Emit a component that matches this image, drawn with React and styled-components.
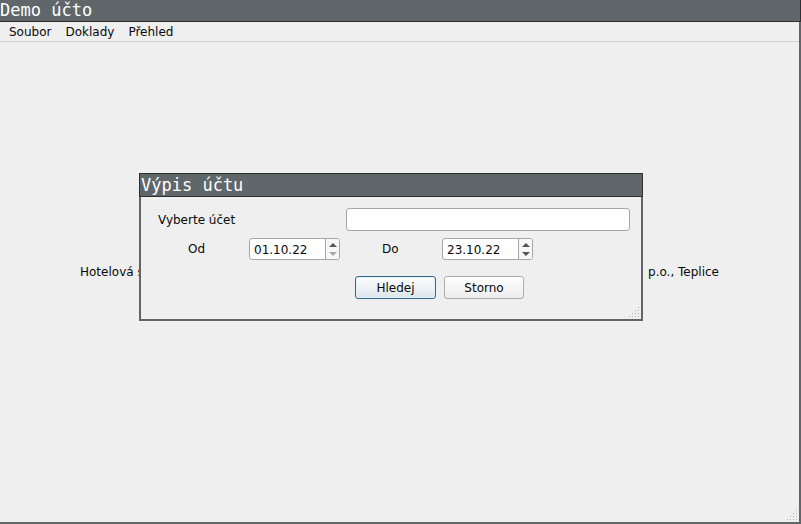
import React from "react";
import styled, { createGlobalStyle } from "styled-components";

const GlobalStyle = createGlobalStyle`
  * { box-sizing: border-box; }
  html, body, #root { height: 100%; }
  body {
    margin: 0;
    background: #efefef;
    color: #0a0a0a;
    font: 12px/14px "DejaVu Sans", sans-serif;
  }
  button, input { font: inherit; color: inherit; margin: 0; }
`;

const Window = styled.main`
  position: relative;
  display: flex;
  flex-direction: column;
  min-height: 100vh;
`;

const TitleBar = styled.header`
  height: ${(p) => (p.$framed ? 24 : 22)}px;
  padding-left: ${(p) => (p.$framed ? 1 : 0)}px;
  border: 1px solid #2d3031;
  border-width: ${(p) => (p.$framed ? "1px" : "0 1px 1px 0")};
  background: #5f676a;
`;

const Title = styled.h1`
  margin: 0;
  color: #fff;
  font: 400 17px/${(p) => (p.$framed ? 22 : 20)}px "DejaVu Sans Mono", monospace;
  white-space: nowrap;
`;

const WindowBody = styled.div`
  position: relative;
  flex: 1;
  display: flex;
  flex-direction: column;
  border: solid #606567;
  border-width: 0 2px 2px 0;
`;

const MenuBar = styled.nav`
  display: flex;
  gap: 2px;
  height: 20px;
  padding-left: 3px;
  border-bottom: 1px solid #d2d2d2;
`;

const MenuItem = styled.button`
  padding: 1px 6px 0;
  border: 0;
  background: none;
  line-height: 18px;
`;

const Workspace = styled.section`
  flex: 1;
  display: flex;
  align-items: center;
  justify-content: space-between;
  padding: 0 80px 20px;
`;

const Dialog = styled.section`
  position: absolute;
  top: 173px;
  left: 139px;
  right: 158px;
  background: #efefef;
`;

const DialogForm = styled.form`
  position: relative;
  padding: 11px 11px 20px 17px;
  border: 2px solid #606567;
  border-top: 0;
`;

const AccountRow = styled.div`
  display: grid;
  grid-template-columns: 188px 1fr;
  align-items: center;
`;

const field = `
  border: 1px solid #a6a6a6;
  border-radius: 3px;
  background: #fff;
`;

const AccountInput = styled.input`
  ${field}
  width: 100%;
  height: 23px;
  padding: 0 4px;
  outline: 0;
`;

const DateRow = styled.div`
  display: flex;
  gap: 42px;
  margin: 7px 0 0 30px;
`;

const DateField = styled.div`
  display: grid;
  grid-template-columns: ${(p) => p.$labelWidth}px 91px;
  line-height: 22px;
`;

const SpinBox = styled.div`
  ${field}
  display: flex;
  height: 22px;
  overflow: hidden;
`;

const DateInput = styled.input`
  flex: 1;
  min-width: 0;
  padding: 2px 0 0 4px;
  border: 0;
  background: none;
  outline: 0;
`;

const Steps = styled.div`
  display: grid;
  grid-template-rows: 1fr 1fr;
  width: 14px;
  padding: 2px 0 1px;
  border-left: 1px solid #a6a6a6;
  background: #f7f7f7;
`;

const Step = styled.button`
  display: flex;
  justify-content: center;
  align-items: center;
  padding: 0;
  border: 0;
  background: none;
  color: #555;
  &:disabled { color: #a8a8a8; }
`;

const Actions = styled.div`
  display: flex;
  gap: 8px;
  margin: 16px 0 0 197px;
`;

const ActionButton = styled.button`
  width: ${(p) => (p.$primary ? 81 : 80)}px;
  height: 23px;
  padding: 0;
  border: 1px solid ${(p) => (p.$primary ? "#35678a" : "#adadad")};
  border-radius: 3px;
  background: ${(p) =>
    p.$primary
      ? "linear-gradient(#fbfdfe, #eef3f6 50%, #dce5eb)"
      : "linear-gradient(#fefefe, #f5f5f5 50%, #ececec)"};
  box-shadow: ${(p) => (p.$primary ? "inset 0 0 0 1px #e2f2fb" : "none")};
`;

const GripIcon = styled.svg`
  position: absolute;
  right: 1px;
  bottom: 1px;
  display: block;
`;

function Grip() {
  const dots = [];
  for (let row = 0; row < 4; row++) {
    for (let col = 3 - row; col < 4; col++) {
      dots.push(<rect key={`${row}${col}`} x={col * 3} y={row * 3} width="1" height="1" />);
    }
  }
  return (
    <GripIcon width="11" height="11" fill="#b5b5b5" aria-hidden="true">
      {dots}
    </GripIcon>
  );
}

function DateSpin({ id, label, labelWidth, value, atMinimum }) {
  return (
    <DateField $labelWidth={labelWidth}>
      <label htmlFor={id}>{label}</label>
      <SpinBox>
        <DateInput id={id} defaultValue={value} />
        <Steps>
          <Step type="button" aria-label={`${label} +`}>
            <svg width="8" height="4" fill="currentColor"><path d="M0 4 4 0 8 4z" /></svg>
          </Step>
          <Step type="button" aria-label={`${label} −`} disabled={atMinimum}>
            <svg width="8" height="4" fill="currentColor"><path d="M0 0 4 4 8 0z" /></svg>
          </Step>
        </Steps>
      </SpinBox>
    </DateField>
  );
}

export default function App() {
  return (
    <Window>
      <GlobalStyle />
      <TitleBar><Title>Demo účto</Title></TitleBar>
      <WindowBody>
        <MenuBar>
          {["Soubor", "Doklady", "Přehled"].map((name) => (
            <MenuItem key={name} type="button">{name}</MenuItem>
          ))}
        </MenuBar>
        <Workspace>
          <span>Hotelová škola</span>
          <span>p.o., Teplice</span>
        </Workspace>
        <Grip />
      </WindowBody>
      <Dialog role="dialog" aria-labelledby="dialog-title">
        <TitleBar $framed><Title as="h2" id="dialog-title" $framed>Výpis účtu</Title></TitleBar>
        <DialogForm onSubmit={(e) => e.preventDefault()}>
          <AccountRow>
            <label htmlFor="account">Vyberte účet</label>
            <AccountInput id="account" />
          </AccountRow>
          <DateRow>
            <DateSpin id="from" label="Od" labelWidth={61} value="01.10.22" atMinimum />
            <DateSpin id="to" label="Do" labelWidth={60} value="23.10.22" />
          </DateRow>
          <Actions>
            <ActionButton type="submit" $primary>Hledej</ActionButton>
            <ActionButton type="button">Storno</ActionButton>
          </Actions>
          <Grip />
        </DialogForm>
      </Dialog>
    </Window>
  );
}
